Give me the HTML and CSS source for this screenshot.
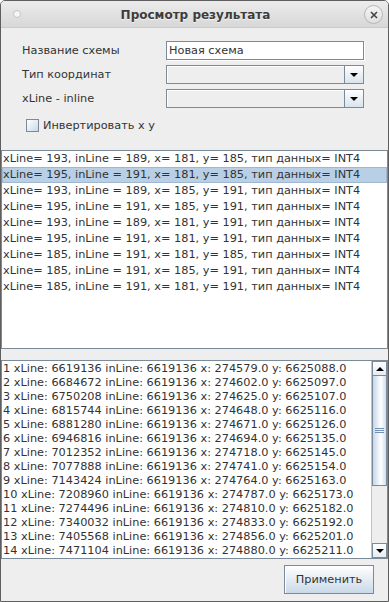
FILE: index.html
```html
<!DOCTYPE html>
<html lang="ru">
<head>
    <meta charset="UTF-8">
    <title>Просмотр результата</title>
    <link rel="stylesheet" href="styles.css">
</head>
<body>
<div class="window">
    <div class="titleBar">
        <span class="titleDot"></span>
        <span class="titleText">Просмотр результата</span>
        <span class="titleClose">
            <svg width="10" height="10" viewBox="0 0 10 10"><path d="M2 2 L8 8 M8 2 L2 8" stroke="#444" stroke-width="1.6"/></svg>
        </span>
    </div>
    <div class="content">
        <div class="form">
            <label class="fieldLabel">Название схемы</label>
            <div class="textField">Новая схема</div>

            <label class="fieldLabel">Тип координат</label>
            <div class="combo">
                <div class="comboField"></div>
                <div class="comboButton"><span class="arrowDown"></span></div>
            </div>

            <label class="fieldLabel">xLine - inline</label>
            <div class="combo">
                <div class="comboField"></div>
                <div class="comboButton"><span class="arrowDown"></span></div>
            </div>
        </div>

        <label class="checkRow"><span class="checkBox"></span>Инвертировать x y</label>

        <ul class="resultList">
            <li>xLine= 193, inLine = 189, x= 181, y= 185, тип данных= INT4</li>
            <li class="selected">xLine= 195, inLine = 191, x= 181, y= 185, тип данных= INT4</li>
            <li>xLine= 193, inLine = 189, x= 185, y= 191, тип данных= INT4</li>
            <li>xLine= 195, inLine = 191, x= 185, y= 191, тип данных= INT4</li>
            <li>xLine= 193, inLine = 189, x= 181, y= 191, тип данных= INT4</li>
            <li>xLine= 195, inLine = 191, x= 181, y= 191, тип данных= INT4</li>
            <li>xLine= 185, inLine = 191, x= 181, y= 185, тип данных= INT4</li>
            <li>xLine= 185, inLine = 191, x= 185, y= 191, тип данных= INT4</li>
            <li>xLine= 185, inLine = 191, x= 181, y= 191, тип данных= INT4</li>
        </ul>

        <div class="textArea">
            <div class="lines">
                <div>1 xLine: 6619136 inLine: 6619136 x: 274579.0 y: 6625088.0</div>
                <div>2 xLine: 6684672 inLine: 6619136 x: 274602.0 y: 6625097.0</div>
                <div>3 xLine: 6750208 inLine: 6619136 x: 274625.0 y: 6625107.0</div>
                <div>4 xLine: 6815744 inLine: 6619136 x: 274648.0 y: 6625116.0</div>
                <div>5 xLine: 6881280 inLine: 6619136 x: 274671.0 y: 6625126.0</div>
                <div>6 xLine: 6946816 inLine: 6619136 x: 274694.0 y: 6625135.0</div>
                <div>7 xLine: 7012352 inLine: 6619136 x: 274718.0 y: 6625145.0</div>
                <div>8 xLine: 7077888 inLine: 6619136 x: 274741.0 y: 6625154.0</div>
                <div>9 xLine: 7143424 inLine: 6619136 x: 274764.0 y: 6625163.0</div>
                <div>10 xLine: 7208960 inLine: 6619136 x: 274787.0 y: 6625173.0</div>
                <div>11 xLine: 7274496 inLine: 6619136 x: 274810.0 y: 6625182.0</div>
                <div>12 xLine: 7340032 inLine: 6619136 x: 274833.0 y: 6625192.0</div>
                <div>13 xLine: 7405568 inLine: 6619136 x: 274856.0 y: 6625201.0</div>
                <div>14 xLine: 7471104 inLine: 6619136 x: 274880.0 y: 6625211.0</div>
            </div>
            <div class="scrollBar">
                <div class="scrollButton"><span class="arrowUp"></span></div>
                <div class="scrollTrack">
                    <div class="scrollThumb"><span class="grip"></span></div>
                </div>
                <div class="scrollButton"><span class="arrowDown"></span></div>
            </div>
        </div>

        <div class="footer">
            <button class="applyButton">Применить</button>
        </div>
    </div>
</div>
</body>
</html>
```

FILE: styles.css
```css
* {
    box-sizing: border-box;
}

body {
    margin: 0;
    background: #ffffff;
    font-family: "DejaVu Sans", sans-serif;
    font-size: 11.3px;
    color: #333333;
}

.window {
    width: 389px;
    height: 602px;
    border: 1px solid #5e5e5e;
    border-radius: 5px 5px 0 0;
    background: #eeeeee;
    display: flex;
    flex-direction: column;
    overflow: hidden;
}

/* title bar */
.titleBar {
    height: 27px;
    flex: none;
    display: flex;
    align-items: center;
    padding: 0 5px 0 12px;
    background: linear-gradient(#ececec, #d7d7d7);
    border-bottom: 1px solid #cacaca;
}

.titleDot {
    width: 8px;
    height: 8px;
    border-radius: 50%;
    border: 1px solid #c4c4c4;
    background: #f6f6f6;
}

.titleText {
    flex: 1;
    text-align: center;
    font-weight: bold;
    font-size: 12px;
    color: #3c3c3c;
    text-shadow: 0 1px 0 #f4f4f4;
    padding-left: 6px;
    margin-top: 1px;
}

.titleClose {
    width: 19px;
    height: 19px;
    border-radius: 50%;
    border: 1px solid #b5b5b5;
    background: linear-gradient(#f4f4f4, #e0e0e0);
    display: flex;
    align-items: center;
    justify-content: center;
    margin-top: 1px;
}

.content {
    flex: 1;
    display: flex;
    flex-direction: column;
}

/* form */
.form {
    display: grid;
    grid-template-columns: 144px 198px;
    grid-auto-rows: 19px;
    row-gap: 5px;
    padding: 13px 0 0 21px;
    align-items: center;
}

.fieldLabel {
    color: #333333;
}

.textField {
    height: 19px;
    border: 1px solid #7a8a99;
    box-shadow: 1px 1px 0 #ffffff;
    background: #ffffff;
    padding: 1px 2px;
    line-height: 15px;
}

.combo {
    height: 19px;
    display: flex;
}

.comboField {
    flex: 1;
    border: 1px solid #7a8a99;
    box-shadow: inset 1px 1px 0 #ffffff;
    background: #eeeeee;
}

.comboButton {
    width: 19px;
    border: 1px solid #7a8a99;
    border-left: none;
    background: linear-gradient(#ffffff, #dae3ec);
    display: flex;
    align-items: center;
    justify-content: center;
}

.arrowDown {
    width: 0;
    height: 0;
    border-left: 4px solid transparent;
    border-right: 4px solid transparent;
    border-top: 4px solid #000000;
}

.arrowUp {
    width: 0;
    height: 0;
    border-left: 4px solid transparent;
    border-right: 4px solid transparent;
    border-bottom: 4px solid #000000;
}

.checkRow {
    display: flex;
    align-items: center;
    margin: 11px 0 0 25px;
    height: 13px;
}

.checkBox {
    width: 13px;
    height: 13px;
    border: 1px solid #7a8a99;
    background: linear-gradient(135deg, #ffffff, #c8d8e8);
    margin-right: 4px;
}

/* lists */
.resultList {
    list-style: none;
    margin: 18px 0 0 0;
    padding: 0;
    height: 199px;
    border: 1px solid #7a8a99;
    background: #ffffff;
}

.resultList li {
    height: 16px;
    line-height: 16px;
    padding-left: 1px;
    white-space: nowrap;
}

.resultList li.selected {
    background: #b8cfe5;
    box-shadow: inset 0 0 0 1px #9fb7d1;
}

.textArea {
    margin-top: 11px;
    height: 199px;
    border: 1px solid #7a8a99;
    background: #ffffff;
    display: flex;
}

.lines {
    flex: 1;
    padding: 1px 0 0 1px;
    line-height: 14px;
    white-space: nowrap;
    overflow: hidden;
}

.scrollBar {
    width: 16px;
    flex: none;
    display: flex;
    flex-direction: column;
    background: #eeeeee;
    border-left: 1px solid #b8c4cf;
}

.scrollButton {
    height: 15px;
    flex: none;
    border: 1px solid #7a8a99;
    background: linear-gradient(#ffffff, #e6ecf2);
    display: flex;
    align-items: center;
    justify-content: center;
}

.scrollTrack {
    flex: 1;
    background: #eeeeee;
}

.scrollThumb {
    height: 110px;
    border: 1px solid #7a8a99;
    border-top: none;
    background: linear-gradient(90deg, #c3d6ea, #ffffff 60%, #d0dfee);
    display: flex;
    align-items: center;
    justify-content: center;
}

.grip {
    width: 9px;
    height: 5px;
    border-top: 1px solid #6f8fb5;
    border-bottom: 1px solid #6f8fb5;
    position: relative;
}

.grip::after {
    content: "";
    position: absolute;
    left: 0;
    right: 0;
    top: 1px;
    border-top: 1px solid #6f8fb5;
}

/* footer */
.footer {
    display: flex;
    justify-content: flex-end;
    padding: 6px 14px 0 0;
}

.applyButton {
    width: 90px;
    height: 29px;
    border: 1px solid #7a8a99;
    box-shadow: inset 1px 1px 0 #ffffff;
    background: linear-gradient(#ffffff, #cad9e8);
    font-family: "DejaVu Sans", sans-serif;
    font-size: 11.3px;
    color: #333333;
    padding: 0;
}
```
